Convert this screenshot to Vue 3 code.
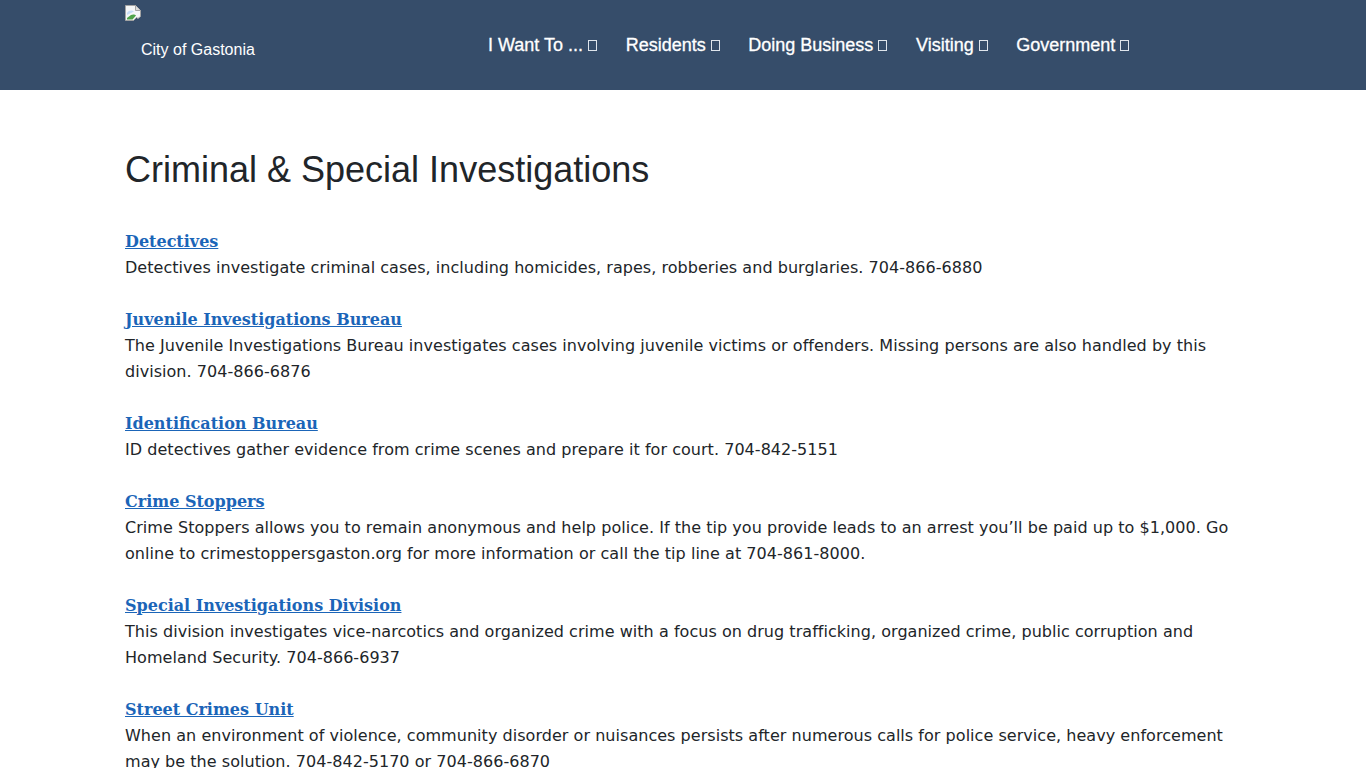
<script setup>
const navItems = ['I Want To ...', 'Residents', 'Doing Business', 'Visiting', 'Government']

const sections = [
  {
    title: 'Detectives',
    text: 'Detectives investigate criminal cases, including homicides, rapes, robberies and burglaries. 704-866-6880'
  },
  {
    title: 'Juvenile Investigations Bureau',
    text: 'The Juvenile Investigations Bureau investigates cases involving juvenile victims or offenders. Missing persons are also handled by this division. 704-866-6876'
  },
  {
    title: 'Identification Bureau',
    text: 'ID detectives gather evidence from crime scenes and prepare it for court. 704-842-5151'
  },
  {
    title: 'Crime Stoppers',
    text: 'Crime Stoppers allows you to remain anonymous and help police. If the tip you provide leads to an arrest you’ll be paid up to $1,000. Go online to crimestoppersgaston.org for more information or call the tip line at 704-861-8000.'
  },
  {
    title: 'Special Investigations Division',
    text: 'This division investigates vice-narcotics and organized crime with a focus on drug trafficking, organized crime, public corruption and Homeland Security. 704-866-6937'
  },
  {
    title: 'Street Crimes Unit',
    text: 'When an environment of violence, community disorder or nuisances persists after numerous calls for police service, heavy enforcement may be the solution. 704-842-5170 or 704-866-6870'
  }
]
</script>

<template>
  <div class="page">
    <header class="topbar">
      <a class="brand" href="#">
        <svg class="broken" width="16" height="16" viewBox="0 0 16 16">
          <path d="M0.5 0.5H10.5L15.5 5.5V11.5L13 13.5L11.5 12.5L8.5 15.5H0.5Z" fill="#f4f6f8" stroke="#a3a3a3" />
          <path d="M10.5 0.5V5.5H15.5" fill="#dcdcdc" stroke="#a3a3a3" />
          <path d="M2 8C4 5 7 5 9 6.5L2 10Z" fill="#c6dcf5" />
          <path d="M2 14.5V13L6 10C8 9 10 9.5 11 10.5L7.5 14.5Z" fill="#4ea34a" />
        </svg>
        <span class="brand-name">City of Gastonia</span>
      </a>
      <nav class="nav">
        <a v-for="item in navItems" :key="item" class="nav-link" href="#">
          {{ item }} <span class="caret"></span>
        </a>
      </nav>
    </header>

    <main class="content">
      <h1>Criminal &amp; Special Investigations</h1>
      <section v-for="s in sections" :key="s.title" class="entry">
        <a class="entry-title" href="#">{{ s.title }}</a>
        <p>{{ s.text }}</p>
      </section>
    </main>
  </div>
</template>

<style scoped>
.page {
  height: 768px;
  overflow: hidden;
  background: #fff;
}

.topbar {
  height: 90px;
  background: #364d6a;
  display: flex;
  padding-left: 125px;
}

.brand {
  width: 363px;
  padding-top: 5px;
  color: #fff;
  text-decoration: none;
  font-family: 'Liberation Sans', Arial, sans-serif;
  font-size: 16px;
}

.broken {
  display: block;
}

.brand-name {
  display: block;
  margin: 19px 0 0 16px;
  line-height: 20px;
}

.nav {
  display: flex;
  gap: 28.6px;
  padding-top: 34.5px;
}

.nav-link {
  color: #fff;
  text-decoration: none;
  font-family: 'Liberation Sans', Arial, sans-serif;
  font-size: 18px;
  line-height: 21px;
  white-space: nowrap;
  -webkit-text-stroke: 0.3px #fff;
}

.caret {
  display: inline-block;
  box-sizing: border-box;
  width: 9px;
  height: 11px;
  border: 1px solid #dfe5ec;
  vertical-align: 0;
}

.content {
  padding: 58px 125px 0;
  color: #212529;
  font-family: 'DejaVu Sans', Verdana, sans-serif;
  font-size: 16px;
  line-height: 26px;
  letter-spacing: 0.04px;
}

h1 {
  margin: 0 0 38px;
  font-family: 'Liberation Sans', Arial, sans-serif;
  font-size: 36px;
  font-weight: 400;
  line-height: 43px;
  letter-spacing: 0;
}

.entry {
  margin-bottom: 26px;
}

.entry-title {
  display: block;
  color: #1b65b8;
  font-family: 'DejaVu Serif', Georgia, serif;
  font-size: 16px;
  font-weight: 700;
  text-decoration: underline;
  letter-spacing: 0;
}

p {
  margin: 0;
}
</style>
